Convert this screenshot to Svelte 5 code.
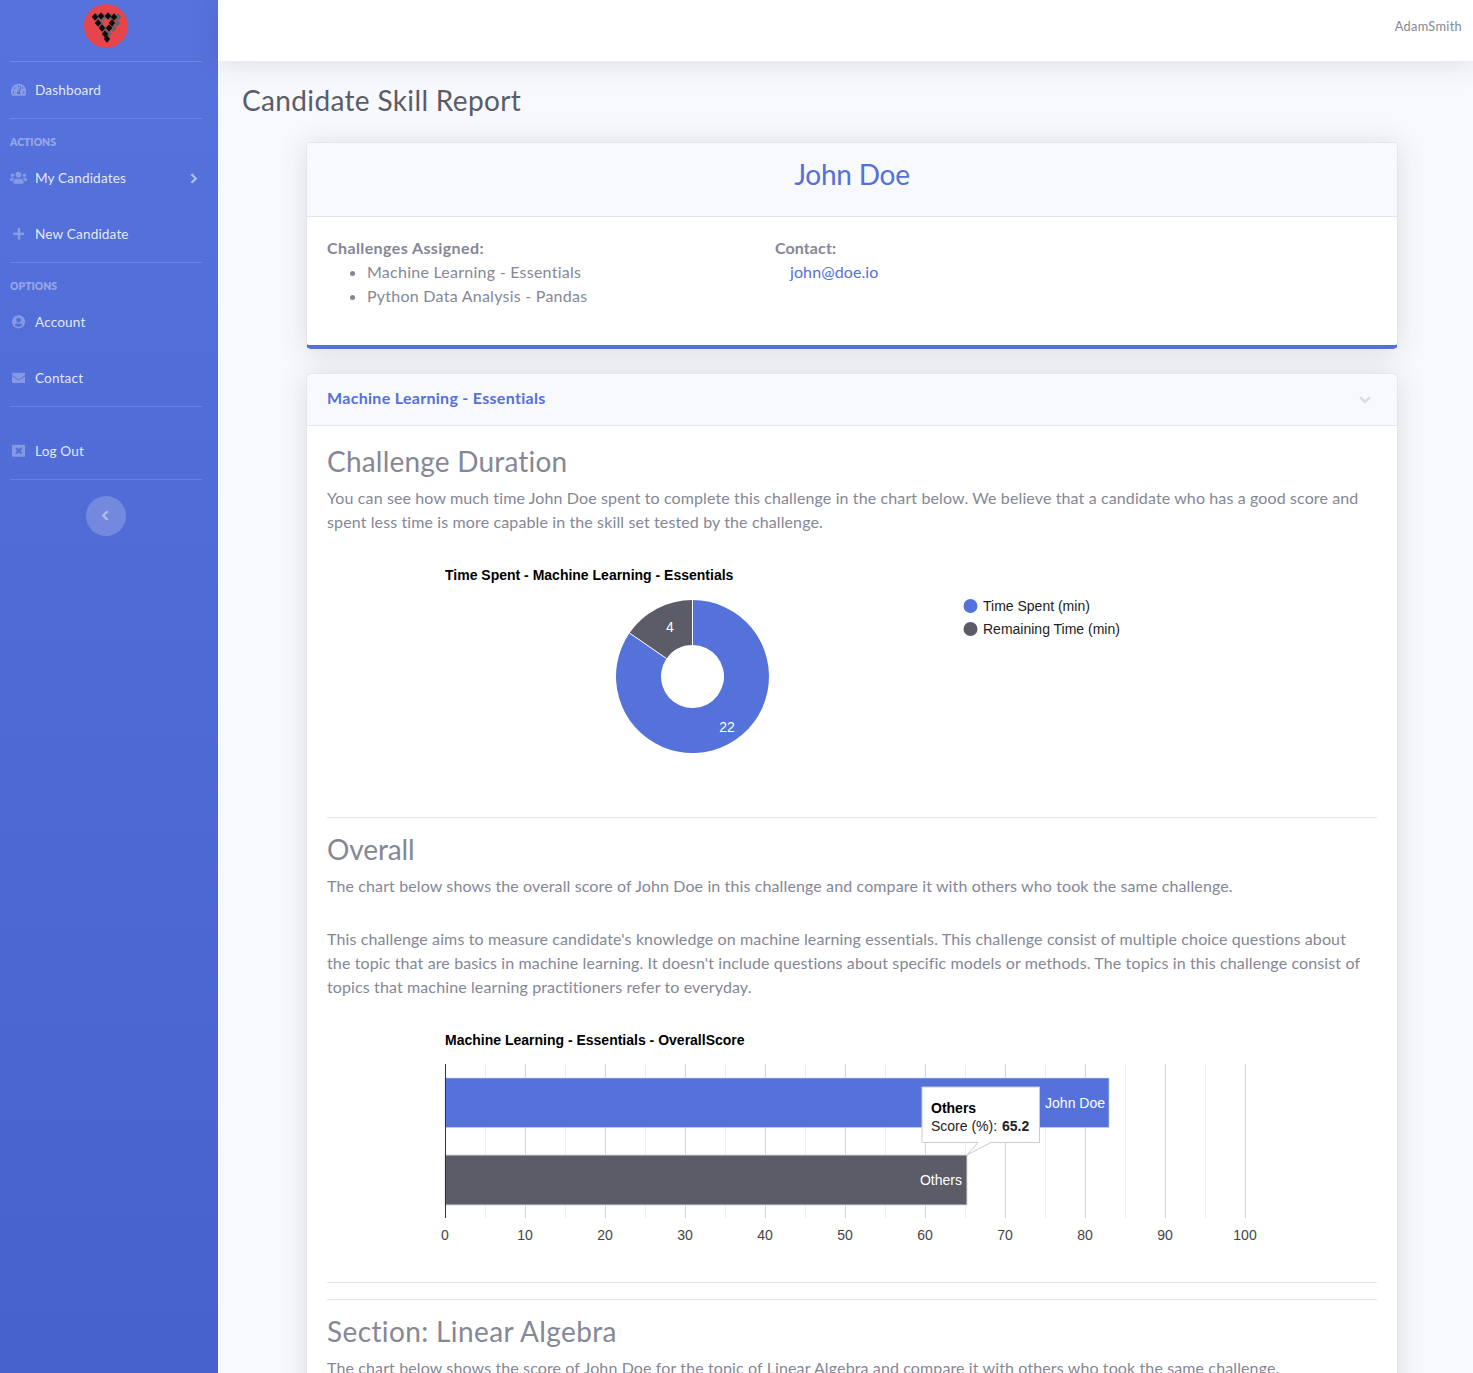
<script>
  const P = {
    dash: ['0 0 576 512', 'M288 32C128.94 32 0 160.94 0 320c0 52.8 14.25 102.26 39.06 144.8 5.61 9.62 16.3 15.2 27.44 15.2h443c11.14 0 21.83-5.58 27.44-15.2C561.75 422.26 576 372.8 576 320c0-159.06-128.94-288-288-288zm0 64c14.71 0 26.58 10.13 30.32 23.65-1.11 2.26-2.64 4.23-3.45 6.67l-9.22 27.67c-5.13 3.49-10.97 6.01-17.64 6.01-17.67 0-32-14.33-32-32S270.33 96 288 96zM96 384c-17.67 0-32-14.33-32-32s14.33-32 32-32 32 14.33 32 32-14.33 32-32 32zm48-160c-17.67 0-32-14.33-32-32s14.33-32 32-32 32 14.33 32 32-14.33 32-32 32zm246.77-72.41l-61.33 184C343.13 347.33 352 364.54 352 384c0 11.72-3.38 22.55-8.88 32H232.88c-5.5-9.45-8.88-20.28-8.88-32 0-33.94 26.5-61.43 59.9-63.59l61.34-184.01c4.17-12.56 17.73-19.45 30.36-15.17 12.57 4.19 19.35 17.79 15.17 30.36zm14.66 57.2l15.52-46.55c3.47-1.29 7.13-2.23 11.05-2.23 17.67 0 32 14.33 32 32s-14.33 32-32 32c-11.38-.01-20.89-6.28-26.57-15.22zM480 384c-17.67 0-32-14.33-32-32s14.33-32 32-32 32 14.33 32 32-14.33 32-32 32z'],
    users: ['0 0 640 512', 'M96 224c35.3 0 64-28.7 64-64s-28.7-64-64-64-64 28.7-64 64 28.7 64 64 64zm448 0c35.3 0 64-28.7 64-64s-28.7-64-64-64-64 28.7-64 64 28.7 64 64 64zm32 32h-64c-17.6 0-33.5 7.1-45.1 18.6 40.3 22.1 68.9 62 75.1 109.4h66c17.7 0 32-14.3 32-32v-32c0-35.3-28.7-64-64-64zm-256 0c61.9 0 112-50.1 112-112S381.9 32 320 32 208 82.1 208 144s50.1 112 112 112zm76.8 32h-8.3c-20.8 10-43.9 16-68.5 16s-47.6-6-68.5-16h-8.3C179.6 288 128 339.6 128 403.2V432c0 26.5 21.5 48 48 48h288c26.5 0 48-21.5 48-48v-28.8c0-63.6-51.6-115.2-115.2-115.2zm-223.7-13.4C161.5 263.1 145.6 256 128 256H64c-35.3 0-64 28.7-64 64v32c0 17.7 14.3 32 32 32h65.9c6.3-47.4 34.9-87.3 75.2-109.4z'],
    plus: ['0 0 448 512', 'M416 208H272V64c0-17.67-14.33-32-32-32h-32c-17.67 0-32 14.33-32 32v144H32c-17.67 0-32 14.33-32 32v32c0 17.67 14.33 32 32 32h144v144c0 17.67 14.33 32 32 32h32c17.67 0 32-14.33 32-32V304h144c17.67 0 32-14.33 32-32v-32c0-17.67-14.33-32-32-32z'],
    user: ['0 0 496 512', 'M248 8C111 8 0 119 0 256s111 248 248 248 248-111 248-248S385 8 248 8zm0 96c48.6 0 88 39.4 88 88s-39.4 88-88 88-88-39.4-88-88 39.4-88 88-88zm0 344c-58.7 0-111.3-26.6-146.5-68.2 18.8-35.4 55.6-59.8 98.5-59.8 2.4 0 4.8.4 7.1 1.1 13 4.2 26.6 6.9 40.9 6.9 14.3 0 28-2.7 40.9-6.9 2.3-.7 4.7-1.1 7.1-1.1 42.9 0 79.7 24.4 98.5 59.8C359.3 421.4 306.7 448 248 448z'],
    mail: ['0 0 512 512', 'M502.3 190.8c3.9-3.1 9.7-.2 9.7 4.7V400c0 26.5-21.5 48-48 48H48c-26.5 0-48-21.5-48-48V195.6c0-5 5.7-7.8 9.7-4.7 22.4 17.4 52.1 39.5 154.1 113.6 21.1 15.4 56.7 47.8 92.2 47.6 35.7.3 72-32.8 92.3-47.6 102-74.1 131.6-96.3 154-113.7zM256 320c23.2.4 56.6-29.2 73.4-41.4 132.7-96.3 142.8-104.7 173.4-128.7 5.8-4.5 9.2-11.5 9.2-18.9v-19c0-26.5-21.5-48-48-48H48C21.5 64 0 85.5 0 112v19c0 7.4 3.4 14.3 9.2 18.9 30.6 23.9 40.7 32.4 173.4 128.7 16.8 12.2 50.2 41.8 73.4 41.4z'],
    close: ['0 0 512 512', 'M464 32H48C21.5 32 0 53.5 0 80v352c0 26.5 21.5 48 48 48h416c26.5 0 48-21.5 48-48V80c0-26.5-21.5-48-48-48zm-83.6 290.5c4.8 4.8 4.8 12.6 0 17.4l-40.5 40.5c-4.8 4.8-12.6 4.8-17.4 0L256 313.3l-66.5 67.1c-4.8 4.8-12.6 4.8-17.4 0l-40.5-40.5c-4.8-4.8-4.8-12.6 0-17.4l67.1-66.5-67.1-66.5c-4.8-4.8-4.8-12.6 0-17.4l40.5-40.5c4.8-4.8 12.6-4.8 17.4 0l66.5 67.1 66.5-67.1c4.8-4.8 12.6-4.8 17.4 0l40.5 40.5c4.8 4.8 4.8 12.6 0 17.4L313.3 256l67.1 66.5z']
  };
  const chevR = 'M285.476 272.971L91.132 467.314c-9.373 9.373-24.569 9.373-33.941 0l-22.667-22.667c-9.357-9.357-9.375-24.522-.04-33.901L188.505 256 34.484 101.255c-9.335-9.379-9.317-24.544.04-33.901l22.667-22.667c9.373-9.373 24.569-9.373 33.941 0L285.475 239.03c9.373 9.372 9.373 24.568.001 33.941z';
  const chevL = 'M34.52 239.03L228.87 44.69c9.37-9.37 24.57-9.37 33.94 0l22.67 22.67c9.36 9.36 9.37 24.52.04 33.9L131.49 256l154.02 154.75c9.34 9.38 9.32 24.54-.04 33.9l-22.67 22.67c-9.37 9.37-24.57 9.37-33.94 0L34.52 272.97c-9.37-9.37-9.37-24.57 0-33.94z';
  const chevD = 'M207.029 381.476L12.686 187.132c-9.373-9.373-9.373-24.569 0-33.941l22.667-22.667c9.357-9.357 24.522-9.375 33.901-.04L224 284.505l154.745-154.021c9.379-9.335 24.544-9.317 33.901.04l22.667 22.667c9.373 9.373 9.373 24.569 0 33.941L240.971 381.476c-9.373 9.372-24.569 9.372-33.942 0z';

  const greyBlocks = [[97,17],[103,17],[111,17],[118,17],[100,23],[117,23],[104,29],[113,28],[108,34]];
  const blackBlocks = [[95,17],[101,16],[108,16],[114,17],[98,23],[112,23],[102,28],[109,28],[105,34],[107,39]];

  const cx = 692.5 - 327, cy = 676.5 - 552, R = 76.5, r = 31.5;
  const a = (22 / 26) * Math.PI * 2;
  const px = (rad, ang) => (cx + rad * Math.sin(ang)).toFixed(2);
  const py = (rad, ang) => (cy - rad * Math.cos(ang)).toFixed(2);
  const blue = `M${px(R,0)} ${py(R,0)}A${R} ${R} 0 1 1 ${px(R,a)} ${py(R,a)}L${px(r,a)} ${py(r,a)}A${r} ${r} 0 1 0 ${px(r,0)} ${py(r,0)}Z`;
  const grey = `M${px(R,a)} ${py(R,a)}A${R} ${R} 0 0 1 ${px(R,0)} ${py(R,0)}L${px(r,0)} ${py(r,0)}A${r} ${r} 0 0 0 ${px(r,a)} ${py(r,a)}Z`;

  const X0 = 118;
  const majors = [0,10,20,30,40,50,60,70,80,90,100];
  const minors = [5,15,25,35,45,55,65,75,85,95];
</script>

{#snippet icon(k)}
  <svg class="ico" viewBox={P[k][0]} aria-hidden="true"><path d={P[k][1]} /></svg>
{/snippet}

{#snippet navItem(k, label, chevron = false)}
  <a class="nav-item" href="#top">
    <span class="ico-box">{@render icon(k)}</span>
    <span class="nav-label">{label}</span>
    {#if chevron}
      <svg class="nav-chev" viewBox="0 0 320 512" aria-hidden="true"><path d={chevR} /></svg>
    {/if}
  </a>
{/snippet}

<div class="page">
  <aside class="sidebar">
    <div class="brand">
      <svg class="logo" viewBox="84 4 44 44" aria-hidden="true">
        <circle cx="106" cy="26" r="22" fill="#e8444b" />
        {#each greyBlocks as [x, y]}
          <polygon points="{x-3.5},{y} {x},{y-4} {x+3.5},{y} {x},{y+4}" fill="#646464" />
        {/each}
        {#each blackBlocks as [x, y]}
          <polygon points="{x-3.2},{y} {x},{y-3.8} {x+3.2},{y} {x},{y+3.8}" fill="#0a0a0a" />
        {/each}
        <polygon points="105.5,20 108,23 105.5,26 103,23" fill="#e8444b" />
      </svg>
    </div>
    <hr class="div" />
    {@render navItem('dash', 'Dashboard')}
    <hr class="div" />
    <div class="side-head first">ACTIONS</div>
    {@render navItem('users', 'My Candidates', true)}
    {@render navItem('plus', 'New Candidate')}
    <hr class="div" />
    <div class="side-head">OPTIONS</div>
    {@render navItem('user', 'Account')}
    {@render navItem('mail', 'Contact')}
    <hr class="div" />
    <div class="spacer"></div>
    {@render navItem('close', 'Log Out')}
    <hr class="div" />
    <div class="toggle-row">
      <button class="toggle" aria-label="Collapse sidebar">
        <svg viewBox="0 0 320 512" aria-hidden="true"><path d={chevL} /></svg>
      </button>
    </div>
  </aside>

  <div class="main">
    <header class="topbar"><span class="user">AdamSmith</span></header>
    <div class="content">
      <h1 class="title">Candidate Skill Report</h1>
      <div class="cards">
        <section class="card profile">
          <div class="card-head center"><h2 class="name">John Doe</h2></div>
          <div class="card-body cols">
            <div class="col-a">
              <strong>Challenges Assigned:</strong>
              <ul>
                <li>Machine Learning - Essentials</li>
                <li>Python Data Analysis - Pandas</li>
              </ul>
            </div>
            <div class="col-b">
              <strong>Contact:</strong>
              <a class="mail" href="#top">john@doe.io</a>
            </div>
          </div>
        </section>

        <section class="card">
          <div class="card-head row">
            <h6 class="ctitle">Machine Learning - Essentials</h6>
            <svg class="chev-d" viewBox="0 0 448 512" aria-hidden="true"><path d={chevD} /></svg>
          </div>
          <div class="card-body">
            <h3>Challenge Duration</h3>
            <p>You can see how much time John Doe spent to complete this challenge in the chart below. We believe that a candidate who has a good score and spent less time is more capable in the skill set tested by the challenge.</p>
            <svg class="chart pie" viewBox="0 0 1050 249" role="img" aria-label="Time spent chart">
              <text x="118" y="28" class="ct">Time Spent - Machine Learning - Essentials</text>
              <path d={blue} fill="#5572da" />
              <path d={grey} fill="#5b5c68" />
              <line x1={cx} y1={cy-R} x2={cx} y2={cy-r} stroke="#fff" stroke-width="1" />
              <line x1={px(R,a)} y1={py(R,a)} x2={px(r,a)} y2={py(r,a)} stroke="#fff" stroke-width="1" />
              <text x="343" y="80" class="lbl" text-anchor="middle">4</text>
              <text x="400" y="180" class="lbl" text-anchor="middle">22</text>
              <circle cx="643.5" cy="54" r="7" fill="#5572da" />
              <text x="656" y="59" class="lg">Time Spent (min)</text>
              <circle cx="643.5" cy="77" r="7" fill="#5b5c68" />
              <text x="656" y="82" class="lg">Remaining Time (min)</text>
            </svg>
            <hr class="line" />
            <h3 class="h-over">Overall</h3>
            <p class="mb-wide">The chart below shows the overall score of John Doe in this challenge and compare it with others who took the same challenge.</p>
            <p class="before-chart">This challenge aims to measure candidate's knowledge on machine learning essentials. This challenge consist of multiple choice questions about the topic that are basics in machine learning. It doesn't include questions about specific models or methods. The topics in this challenge consist of topics that machine learning practitioners refer to everyday.</p>
            <svg class="chart bars" viewBox="0 0 1050 251" role="img" aria-label="Overall score chart">
              <text x="118" y="30" class="ct">Machine Learning - Essentials - OverallScore</text>
              {#each minors as m}
                <line x1={X0 + m*8 + .5} y1="49" x2={X0 + m*8 + .5} y2="203" stroke="#ececec" />
              {/each}
              {#each majors as m}
                <line x1={X0 + m*8 + .5} y1="49" x2={X0 + m*8 + .5} y2="203" stroke="#d6d6d6" />
                <text x={X0 + m*8} y="225" class="ax" text-anchor="middle">{m}</text>
              {/each}
              <rect x={X0} y="63" width="664" height="49.5" fill="#5572da" stroke="#c9d2f2" stroke-width=".6" />
              <rect x={X0} y="140" width="522" height="50" fill="#5b5c68" stroke="#d8d8d8" stroke-width="1" />
              <line x1={X0 + .5} y1="49" x2={X0 + .5} y2="203" stroke="#333" />
              <text x="778" y="93" class="lbl" text-anchor="end">John Doe</text>
              <text x="635" y="170" class="lbl" text-anchor="end">Others</text>
              <path d="M595 72H712.5V127.5H664L640 140L651 127.5H595Z" fill="#fff" stroke="#ccc" />
              <text x="604" y="98" class="tip-b">Others</text>
              <text x="604" y="116" class="tip">Score (%): <tspan font-weight="700" dx="1">65.2</tspan></text>
            </svg>
            <hr class="line" />
            <hr class="line tight" />
            <h3 class="h-sec">Section: Linear Algebra</h3>
            <p>The chart below shows the score of John Doe for the topic of Linear Algebra and compare it with others who took the same challenge.</p>
          </div>
        </section>
      </div>
    </div>
  </div>
</div>

<style>
  :global(html), :global(body) { margin: 0; height: 100%; overflow: hidden; }
  :global(body) { background: #f8f9fc; font-family: Lato, "Noto Sans", sans-serif; color: #858796; font-size: 16px; line-height: 24px; }
  * { box-sizing: border-box; }
  .page { display: flex; height: 1373px; overflow: hidden; }

  .sidebar { width: 218px; flex: none; background: linear-gradient(180deg, #5672dc 0%, #4762cd 100%); color: #fff; }
  .brand { height: 61px; padding-top: 4px; display: flex; justify-content: center; padding-right: 6px; }
  .logo { width: 44px; height: 44px; }
  .div { height: 1px; margin: 0 16px 0 10px; border: 0; background: rgba(255,255,255,.15); }
  .nav-item { display: flex; align-items: center; height: 56px; padding: 0 20px 0 10px; color: rgba(255,255,255,.86); text-decoration: none; font-size: 13.6px; letter-spacing: .15px; }
  .ico-box { width: 25px; flex: none; display: flex; justify-content: center; padding-right: 8px; }
  .ico { height: 13.6px; max-width: 17px; fill: rgba(255,255,255,.3); display: block; }
  .nav-label { flex: 1; }
  .nav-chev { width: 8px; height: 11px; fill: #b4c1f0; stroke: #b4c1f0; stroke-width: 30; }
  .side-head { height: 31px; padding: 16px 0 0 10px; font-size: 10.4px; line-height: 15px; font-weight: 800; color: rgba(255,255,255,.4); letter-spacing: .03px; }
  .spacer { height: 16px; }
  .toggle-row { padding: 16px 6px 0 0; display: flex; justify-content: center; }
  .toggle { width: 40px; height: 40px; border: 0; border-radius: 50%; background: rgba(255,255,255,.2); padding: 0; display: flex; align-items: center; justify-content: center; }
  .toggle svg { width: 8px; height: 11px; fill: #b4c1f0; stroke: #b4c1f0; stroke-width: 30; margin: -2px 2px 0 0; }

  .main { flex: 1; min-width: 0; }
  .topbar { height: 61px; background: #fff; box-shadow: 0 .15rem 1.75rem rgba(58,59,69,.15); display: flex; justify-content: flex-end; padding: 16px 11px 0 0; position: relative; }
  .user { font-size: 12.8px; line-height: 20px; letter-spacing: .3px; }
  .content { padding: 0 75px 0 24px; }
  .title { margin: 0; padding-top: 22px; height: 81px; font-size: 28px; line-height: 34px; font-weight: 400; color: #5a5c69; letter-spacing: .35px; }
  .cards { margin-left: 64px; display: flex; flex-direction: column; gap: 24px; }
  .card { background: #fff; border: 1px solid #e3e6f0; border-radius: 5px; box-shadow: 0 .15rem 1.75rem rgba(58,59,69,.15); }
  .profile { border-bottom: 4px solid #5470d9; }
  .card-head { background: #f8f9fc; border-bottom: 1px solid #e3e6f0; border-radius: 5px 5px 0 0; }
  .center { height: 74px; display: flex; justify-content: center; padding-top: 14px; }
  .name { margin: 0; font-size: 28px; line-height: 34px; font-weight: 400; color: #5470d9; letter-spacing: -.25px; }
  .row { height: 52px; display: flex; align-items: center; justify-content: space-between; padding: 0 26px 3px 20px; }
  .ctitle { margin: 0; font-size: 16px; line-height: 20px; font-weight: 700; color: #5470d9; letter-spacing: .3px; }
  .chev-d { width: 12px; height: 12px; fill: #d9dae6; stroke: #d9dae6; stroke-width: 30; margin-top: 3px; }
  .card-body { padding: 20px; }
  .cols { display: flex; padding-top: 19px; }
  .col-a { width: 448px; }
  .col-a strong { letter-spacing: .4px; }
  .col-b { display: flex; flex-direction: column; align-items: flex-start; }
  .col-b strong { letter-spacing: .1px; }
  .mail { color: #5470d9; text-decoration: none; padding-left: 15px; letter-spacing: .1px; }
  strong { font-weight: 700; }
  ul { margin: 0 0 17px; padding-left: 40px; letter-spacing: .25px; }
  h3 { margin: -2px 0 8px; font-size: 28px; line-height: 34px; font-weight: 400; color: #858796; letter-spacing: .2px; }
  .h-over { letter-spacing: -.1px; }
  .h-sec { letter-spacing: .38px; }
  p { margin: 0 0 18px; letter-spacing: .12px; max-width: 1040px; }
  .mb-wide { margin-bottom: 29px; }
  .before-chart { margin-bottom: 16px; }
  .chart { display: block; width: 1050px; font-family: "Liberation Sans", Arial, sans-serif; }
  .pie { height: 249px; }
  .bars { height: 251px; }
  .ct { font-size: 14px; font-weight: 700; fill: #000; }
  .lg, .tip { font-size: 14px; fill: #222; }
  .tip-b { font-size: 14px; font-weight: 700; fill: #000; }
  .lbl { font-size: 14px; fill: #fff; }
  .ax { font-size: 14px; fill: #444; }
  .line { height: 1px; margin: 16px 0; border: 0; background: #e3e6f0; }
  .tight { margin-top: 0; }
</style>
